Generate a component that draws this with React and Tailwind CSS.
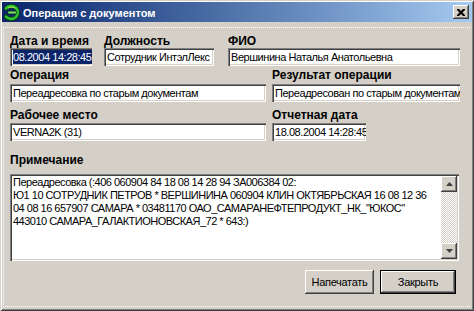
import React from "react";

const sunken =
  "shadow-[inset_1px_1px_#808080,inset_2px_2px_#404040,inset_-1px_-1px_#ffffff,inset_-2px_-2px_#d4d0c8]";
const raised =
  "shadow-[inset_-1px_-1px_#404040,inset_1px_1px_#ffffff,inset_-2px_-2px_#808080,inset_2px_2px_#d4d0c8]";

function Label({ children }) {
  return (
    <div className="h-[13px] leading-[13px] text-[12px] font-bold text-black whitespace-nowrap">
      {children}
    </div>
  );
}

function Field({ className, children }) {
  return (
    <div
      className={
        "h-[18px] bg-white pl-[3px] pr-[2px] overflow-hidden whitespace-nowrap text-[11px] leading-[18px] tracking-[-0.45px] text-black " +
        sunken +
        " " +
        className
      }
    >
      {children}
    </div>
  );
}

function Arrow({ up }) {
  return (
    <svg width="7" height="4" viewBox="0 0 7 4">
      {up ? (
        <path d="M3.5 0 L7 4 L0 4 Z" fill="#404040" />
      ) : (
        <path d="M0 0 L7 0 L3.5 4 Z" fill="#404040" />
      )}
    </svg>
  );
}

export default function App() {
  return (
    <div className="w-[474px] h-[311px] bg-[#d4d0c8] font-['Liberation_Sans',Arial,sans-serif] shadow-[inset_1px_1px_#d4d0c8,inset_-1px_-1px_#404040,inset_2px_2px_#ffffff,inset_-2px_-2px_#808080] pt-[2px] px-[2px] flex flex-col">
      {/* Title bar */}
      <div className="h-[20px] flex items-center bg-gradient-to-r from-[#0a246a] to-[#a6caf0] pl-[1px] pr-[3px]">
        <svg width="17" height="17" viewBox="0 0 17 17" className="shrink-0">
          <path
            d="M3 4.5 C5 1.5 11 1 13.5 4.5 C15.5 7.5 15 11.5 12.5 13.5 C10 15.5 5 15.5 3 12.5"
            fill="none"
            stroke="#0b3d0b"
            strokeWidth="4.2"
            strokeLinecap="round"
          />
          <path
            d="M3 4.5 C5 1.5 11 1 13.5 4.5 C15.5 7.5 15 11.5 12.5 13.5 C10 15.5 5 15.5 3 12.5"
            fill="none"
            stroke="#2fc42f"
            strokeWidth="2.6"
            strokeLinecap="round"
          />
          <path d="M6 8.5 L12.5 8.5" stroke="#0b3d0b" strokeWidth="3.6" strokeLinecap="round" />
          <path d="M6 8.5 L12.5 8.5" stroke="#7be36b" strokeWidth="2" strokeLinecap="round" />
          <path d="M5 4.2 C7 2.8 10 2.8 12 4.2" fill="none" stroke="#c8f060" strokeWidth="1" />
        </svg>
        <div className="ml-[3px] pt-[1px] text-[11px] font-bold text-white leading-[20px] whitespace-nowrap">
          Операция с документом
        </div>
        <div className="flex-1" />
        <div className={"w-[16px] h-[14px] bg-[#d4d0c8] flex items-center justify-center " + raised}>
          <svg width="8" height="7" viewBox="0 0 8 7">
            <path d="M0 0h2l2 2 2-2h2v1L5.5 3.5 8 6v1H6L4 5 2 7H0V6l2.5-2.5L0 1z" fill="#000" />
          </svg>
        </div>
      </div>

      {/* Panel */}
      <div className="mt-[5px] ml-[1px] mr-[2px] flex-1 border-t border-l border-b border-dotted border-white pt-[7px] pl-[6px] pb-[2px] flex flex-col">
        {/* Row 1 */}
        <div className="flex">
          <div className="w-[82px] flex flex-col">
            <Label>Дата и время</Label>
            <Field className="w-[82px] pl-[2px]">
              <span className="bg-[#0a246a] text-white inline-block leading-[14px] pr-[1px]">08.2004 14:28:45</span>
            </Field>
          </div>
          <div className="w-[110px] ml-[12px] flex flex-col">
            <Label>Должность</Label>
            <Field className="w-[110px]">Сотрудник ИнтэлЛекс</Field>
          </div>
          <div className="w-[232px] ml-[14px] flex flex-col">
            <Label>ФИО</Label>
            <Field className="w-[232px]">Вершинина Наталья Анатольевна</Field>
          </div>
        </div>

        {/* Row 2 */}
        <div className="flex mt-[3px]">
          <div className="w-[256px] flex flex-col">
            <Label>Операция</Label>
            <div className="mt-[2px]">
              <Field className="w-[256px]">Переадресовка по старым документам</Field>
            </div>
          </div>
          <div className="w-[188px] ml-[6px] flex flex-col">
            <Label>Результат операции</Label>
            <div className="mt-[2px]">
              <Field className="w-[188px]">Переадресован по старым документам</Field>
            </div>
          </div>
        </div>

        {/* Row 3 */}
        <div className="flex mt-[7px]">
          <div className="w-[256px] flex flex-col">
            <Label>Рабочее место</Label>
            <div className="mt-[1px]">
              <Field className="w-[256px]">VERNA2K (31)</Field>
            </div>
          </div>
          <div className="w-[94px] ml-[6px] flex flex-col">
            <Label>Отчетная дата</Label>
            <div className="mt-[1px]">
              <Field className="w-[94px]">18.08.2004 14:28:45</Field>
            </div>
          </div>
        </div>

        {/* Note */}
        <div className="mt-[13px]">
          <Label>Примечание</Label>
        </div>
        <div className={"mt-[7px] w-[449px] h-[87px] bg-white p-[2px] flex " + sunken}>
          <div className="flex-1 overflow-hidden pl-[1px] pt-0 text-[11px] leading-[13px] tracking-[-0.5px] text-black whitespace-pre">
            {"Переадресовка (:406 060904 84 18 08 14 28 94 ЗА006384 02:\n" +
              "Ю1 10 СОТРУДНИК ПЕТРОВ * ВЕРШИНИНА 060904 КЛИН ОКТЯБРЬСКАЯ 16 08 12 36\n" +
              "04 08 16 657907 САМАРА * 03481170 ОАО_САМАРАНЕФТЕПРОДУКТ_НК_\"ЮКОС\"\n" +
              "443010 САМАРА_ГАЛАКТИОНОВСКАЯ_72 * 643:)"}
          </div>
          <div className="w-[16px] flex flex-col">
            <div className={"h-[16px] bg-[#d4d0c8] flex items-center justify-center " + raised}>
              <Arrow up />
            </div>
            <div className="flex-1 bg-[repeating-conic-gradient(#ffffff_0_25%,#d4d0c8_0_50%)] bg-[length:2px_2px]" />
            <div className={"h-[16px] bg-[#d4d0c8] flex items-center justify-center " + raised}>
              <Arrow />
            </div>
          </div>
        </div>

        {/* Buttons */}
        <div className="mt-[9px] w-[448px] flex justify-end pr-[2px]">
          <div className={"w-[69px] h-[24px] bg-[#d4d0c8] flex items-center justify-center text-[11px] tracking-[-0.3px] text-black " + raised}>
            Напечатать
          </div>
          <div className="ml-[6px] w-[76px] h-[24px] border border-black flex">
            <div className={"flex-1 bg-[#d4d0c8] flex items-center justify-center text-[11px] tracking-[-0.3px] text-black " + raised}>
              Закрыть
            </div>
          </div>
        </div>
      </div>
      <div className="h-[4px]" />
    </div>
  );
}
